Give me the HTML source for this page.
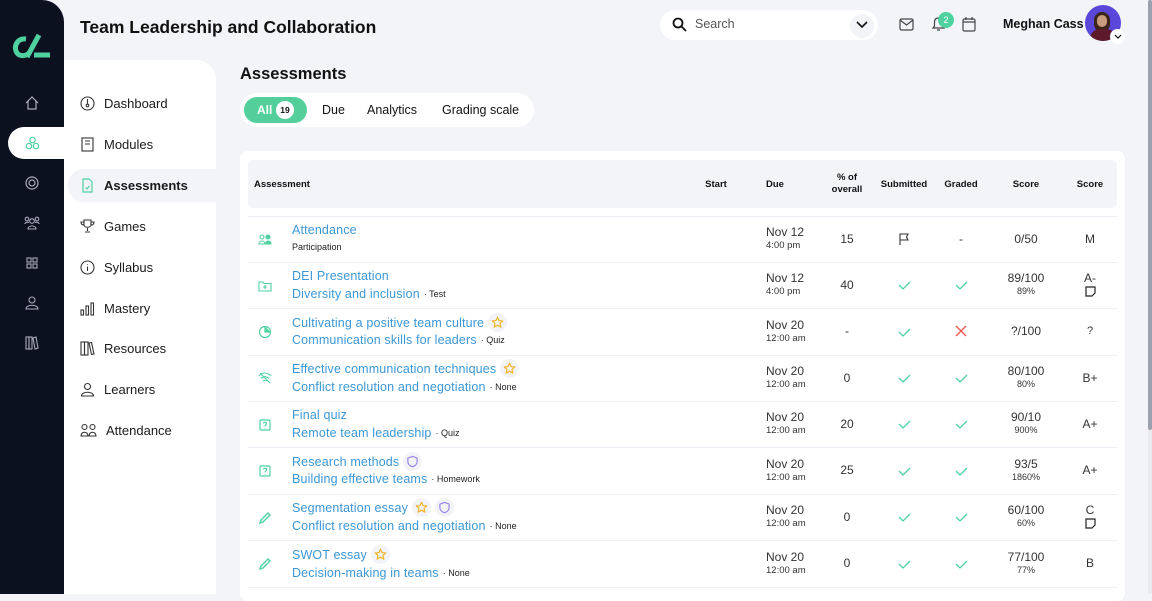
<!DOCTYPE html>
<html><head><meta charset="utf-8"><style>
*{margin:0;padding:0;box-sizing:border-box}
body{width:1152px;height:594px;overflow:hidden;background:#f3f4f8;font-family:"Liberation Sans",sans-serif;color:#111;position:relative}
.abs{position:absolute}
.rail{left:0;top:0;width:64px;height:594px;background:#0c1120;border-top-right-radius:22px}
.nav{left:64px;top:60px;width:152px;height:534px;background:#fff;border-top-right-radius:20px}
.ni{position:absolute;left:16px;font-size:13px;color:#1a1a1a;display:flex;align-items:center;gap:9px}
.ni svg{width:15px;height:15px}
.card{left:240px;top:151px;width:885px;height:450px;background:#fff;border-radius:8px}
.th{left:248px;top:160px;width:869px;height:48px;background:#f3f4f8;border-radius:6px}
.h{position:absolute;font-size:9.5px;font-weight:bold;text-align:center}
.line{position:absolute;left:248px;width:869px;height:1px;background:#eceef3}
.t{position:absolute;left:292px;font-size:12.5px;letter-spacing:0.15px;color:#3b97d6;white-space:nowrap;display:flex;align-items:center;gap:4px}
.s{color:#222;font-size:9px;letter-spacing:0}
.c{position:absolute;font-size:12px;color:#333;text-align:center;transform:translateX(-50%);line-height:13px;white-space:nowrap}
.c small{font-size:9px;display:block}
.d{position:absolute;left:766px;font-size:12px;color:#333;line-height:13px}
.d small{font-size:9.5px;display:block}
.badge{display:inline-flex;align-items:center;justify-content:center;width:19px;height:19px;border-radius:50%;background:#f2f3f7}
.ic{position:absolute;left:258px;width:14px;height:14px}
</style></head><body>
<svg width="0" height="0" style="position:absolute"><defs>
<symbol id="star" viewBox="0 0 14 14"><path d="M7 1.3L8.7 5L12.7 5.3L9.7 8L10.6 12L7 9.9L3.4 12L4.3 8L1.3 5.3L5.3 5Z" fill="none" stroke="#f2b52b" stroke-width="1.3" stroke-linejoin="round"/></symbol>
<symbol id="shield" viewBox="0 0 14 14"><path d="M7 1.5L12 3.3V7C12 10 9.5 11.8 7 12.7C4.5 11.8 2 10 2 7V3.3Z" fill="none" stroke="#9b86e8" stroke-width="1.3" stroke-linejoin="round"/></symbol>
</defs></svg>
<div class="abs rail"></div>
<svg class="abs" style="left:12px;top:33px" width="40" height="28" viewBox="0 0 40 28"><path d="M14 6 C6 5 2 12 4 18 C6 24 14 24 18 19" fill="none" stroke="#4fd1a0" stroke-width="5"/><path d="M27 2 L15 24" stroke="#4fd1a0" stroke-width="5"/><path d="M22 22 H38" stroke="#4fd1a0" stroke-width="5"/></svg>
<svg class="abs" style="left:25px;top:96px" width="14" height="14" viewBox="0 0 14 14" fill="none" stroke="#aab" stroke-width="1.2"><path d="M1 7 L7 1 L13 7 M3 5 V13 H11 V5"/></svg>
<div class="abs" style="left:8px;top:127px;width:56px;height:32px;background:#fff;border-radius:16px 0 0 16px"></div>
<svg class="abs" style="left:25px;top:136px" width="15" height="14" viewBox="0 0 15 14" fill="none" stroke="#4fd1a0" stroke-width="1.2"><circle cx="7.5" cy="4" r="2.7"/><circle cx="4" cy="10" r="2.7"/><circle cx="11" cy="10" r="2.7"/></svg>
<svg class="abs" style="left:25px;top:176px" width="14" height="14" viewBox="0 0 14 14" fill="none" stroke="#aab" stroke-width="1.2"><circle cx="7" cy="7" r="6"/><circle cx="7" cy="7" r="3"/></svg>
<svg class="abs" style="left:24px;top:216px" width="16" height="14" viewBox="0 0 16 14" fill="none" stroke="#aab" stroke-width="1.1"><circle cx="8" cy="5" r="2.3"/><circle cx="3" cy="3" r="1.8"/><circle cx="13" cy="3" r="1.8"/><path d="M4 13 C4 9 12 9 12 13Z M1 8 C1 6 4 6 5 6.5 M15 8 C15 6 12 6 11 6.5"/></svg>
<svg class="abs" style="left:26px;top:257px" width="12" height="12" viewBox="0 0 12 12" fill="none" stroke="#aab" stroke-width="1.1"><rect x="1" y="1" width="4" height="4"/><rect x="7" y="1" width="4" height="4"/><rect x="1" y="7" width="4" height="4"/><rect x="7" y="7" width="4" height="4"/></svg>
<svg class="abs" style="left:25px;top:296px" width="14" height="14" viewBox="0 0 14 14" fill="none" stroke="#aab" stroke-width="1.1"><circle cx="7" cy="4" r="3"/><path d="M1 13 C1 8 13 8 13 13Z"/></svg>
<svg class="abs" style="left:25px;top:336px" width="14" height="14" viewBox="0 0 14 14" fill="none" stroke="#aab" stroke-width="1.1"><rect x="1" y="1" width="3" height="12"/><rect x="4" y="1" width="3" height="12"/><path d="M8 2 L11 1 L13 12 L10 13Z"/></svg>

<div class="abs nav">
 <div class="ni" style="top:36px"><svg viewBox="0 0 15 15" fill="none" stroke="#333" stroke-width="1.1"><circle cx="7.5" cy="7.5" r="6.5"/><path d="M7.5 3 V8"/><circle cx="7.5" cy="9.5" r="1.3"/></svg>Dashboard</div>
 <div class="ni" style="top:77px"><svg viewBox="0 0 15 15" fill="none" stroke="#333" stroke-width="1.1"><rect x="2" y="1" width="11" height="13"/><path d="M5 4H10M5 7H10"/></svg>Modules</div>
 <div class="abs" style="left:4px;top:109px;width:148px;height:33px;background:#f3f4f8;border-radius:16px 0 0 16px"></div>
 <div class="ni" style="top:118px;font-weight:bold"><svg viewBox="0 0 15 15" fill="none" stroke="#4fd1a0" stroke-width="1.2"><path d="M3 1H9L12 4V14H3Z"/><path d="M5.5 9.5L7 11L9.5 8"/></svg>Assessments</div>
 <div class="ni" style="top:159px"><svg viewBox="0 0 15 15" fill="none" stroke="#333" stroke-width="1.1"><path d="M4 1H11V6C11 9 4 9 4 6Z M4 3H1C1 6 3 6 4 6 M11 3H14C14 6 12 6 11 6 M7.5 9V12 M5 13H10"/></svg>Games</div>
 <div class="ni" style="top:200px"><svg viewBox="0 0 15 15" fill="none" stroke="#333" stroke-width="1.1"><circle cx="7.5" cy="7.5" r="6.5"/><path d="M7.5 6.5V11M7.5 4V4.6"/></svg>Syllabus</div>
 <div class="ni" style="top:241px"><svg viewBox="0 0 15 15" fill="none" stroke="#333" stroke-width="1.1"><rect x="1" y="9" width="2.5" height="5"/><rect x="6" y="5" width="2.5" height="9"/><rect x="11" y="2" width="2.5" height="12"/></svg>Mastery</div>
 <div class="ni" style="top:281px"><svg viewBox="0 0 15 15" fill="none" stroke="#333" stroke-width="1.1"><rect x="1" y="1" width="3.5" height="13"/><rect x="4.5" y="1" width="3.5" height="13"/><path d="M9 2L11.5 1.5L14 13L11.5 13.5Z"/></svg>Resources</div>
 <div class="ni" style="top:322px"><svg viewBox="0 0 15 15" fill="none" stroke="#333" stroke-width="1.1"><circle cx="7.5" cy="4.5" r="3"/><path d="M1.5 14C1.5 9 13.5 9 13.5 14Z"/></svg>Learners</div>
 <div class="ni" style="top:363px"><svg viewBox="0 0 17 15" fill="none" stroke="#333" stroke-width="1.1" style="width:17px"><circle cx="4.5" cy="4" r="2.5"/><circle cx="12.5" cy="4" r="2.5"/><path d="M1 13C1 8 8 8 8 13Z M9 13C9 8 16 8 16 13Z"/></svg>Attendance</div>
</div>

<div class="abs" style="left:80px;top:17px;font-size:17.5px;font-weight:bold">Team Leadership and Collaboration</div>
<div class="abs" style="left:660px;top:10px;width:218px;height:30px;background:#fff;border-radius:15px"></div>
<svg class="abs" style="left:672px;top:17px" width="15" height="15" viewBox="0 0 15 15" fill="none" stroke="#111" stroke-width="1.8"><circle cx="6" cy="6" r="4.5"/><path d="M9.5 9.5L14 14"/></svg>
<div class="abs" style="left:695px;top:17px;font-size:12.5px;color:#555">Search</div>
<div class="abs" style="left:850px;top:14px;width:24px;height:24px;border-radius:50%;background:#f3f4f8"></div>
<svg class="abs" style="left:856px;top:20px" width="12" height="9" viewBox="0 0 12 9" fill="none" stroke="#111" stroke-width="1.6"><path d="M1 2L6 7L11 2"/></svg>
<svg class="abs" style="left:899px;top:18px" width="15" height="13" viewBox="0 0 15 13" fill="none" stroke="#444" stroke-width="1.2"><rect x="1" y="1" width="13" height="11" rx="1.5"/><path d="M1 2L7.5 7L14 2"/></svg>
<svg class="abs" style="left:931px;top:16px" width="15" height="16" viewBox="0 0 15 16" fill="none" stroke="#444" stroke-width="1.2"><path d="M2 12H13L11.5 10V6C11.5 3 9.5 2 7.5 2S3.5 3 3.5 6V10Z M6 14H9"/></svg>
<div class="abs" style="left:938px;top:12px;width:16px;height:16px;border-radius:50%;background:#4fd1a0;color:#fff;font-size:9px;text-align:center;line-height:16px">2</div>
<svg class="abs" style="left:962px;top:16px" width="14" height="16" viewBox="0 0 14 16" fill="none" stroke="#444" stroke-width="1.2"><rect x="1" y="3" width="12" height="12" rx="1.5"/><path d="M1 6H13M4 1V4M10 1V4"/></svg>
<div class="abs" style="left:1003px;top:17px;font-size:12.5px;font-weight:bold">Meghan Cass</div>
<div class="abs" style="left:1085px;top:5px;width:36px;height:36px;border-radius:50%;background:#5a46d8;overflow:hidden"><div style="position:absolute;left:9px;top:7px;width:16px;height:20px;border-radius:8px;background:#3b2418"></div><div style="position:absolute;left:12px;top:10px;width:10px;height:12px;border-radius:5px;background:#c99b7e"></div><div style="position:absolute;left:5px;top:24px;width:26px;height:16px;border-radius:10px 10px 0 0;background:#5c1a2a"></div></div>
<div class="abs" style="left:1110px;top:29px;width:15px;height:15px;border-radius:50%;background:#fff"></div>
<svg class="abs" style="left:1114px;top:34px" width="8" height="6" viewBox="0 0 8 6" fill="none" stroke="#111" stroke-width="1.2"><path d="M1 1L4 4L7 1"/></svg>
<div class="abs" style="left:1148px;top:0;width:4px;height:594px;background:#e9eaee"></div>
<div class="abs" style="left:1148px;top:0;width:4px;height:430px;background:#9aa0ad;border-radius:2px"></div>

<div class="abs" style="left:240px;top:65px;font-size:16.5px;font-weight:bold">Assessments</div>
<div class="abs" style="left:240px;top:93px;width:294px;height:34px;background:#fff;border-radius:17px"></div>
<div class="abs" style="left:244px;top:97px;width:63px;height:26px;background:#52cf9a;border-radius:13px"></div>
<div class="abs" style="left:257px;top:103px;font-size:12px;color:#fff;font-weight:bold">All</div>
<div class="abs" style="left:276px;top:101px;width:18px;height:18px;border-radius:50%;background:#fff;font-size:8.5px;font-weight:bold;text-align:center;line-height:18px">19</div>
<div class="abs" style="left:322px;top:103px;font-size:12.5px">Due</div>
<div class="abs" style="left:367px;top:103px;font-size:12.5px">Analytics</div>
<div class="abs" style="left:442px;top:103px;font-size:12.5px">Grading scale</div>

<div class="abs card"></div>
<div class="abs th"></div>
<div class="h" style="left:254px;top:179px">Assessment</div>
<div class="h" style="left:696px;top:179px;width:40px">Start</div>
<div class="h" style="left:766px;top:179px">Due</div>
<div class="h" style="left:822px;top:172px;width:50px;line-height:12px">% of<br>overall</div>
<div class="h" style="left:874px;top:179px;width:60px">Submitted</div>
<div class="h" style="left:936px;top:179px;width:50px">Graded</div>
<div class="h" style="left:1001px;top:179px;width:50px">Score</div>
<div class="h" style="left:1065px;top:179px;width:50px">Score</div>

<div class="line" style="top:216px"></div><div class="line" style="top:262px"></div><div class="line" style="top:308px"></div><div class="line" style="top:355px"></div><div class="line" style="top:401px"></div><div class="line" style="top:447px"></div><div class="line" style="top:494px"></div><div class="line" style="top:540px"></div><div class="line" style="top:587px"></div>

<svg class="ic" style="top:233px" viewBox="0 0 14 14" fill="none" stroke="#4fd1a0" stroke-width="1.1"><circle cx="4" cy="4" r="2"/><circle cx="10" cy="4" r="2" fill="#4fd1a0"/><path d="M1 11C1 7 7 7 7 11Z"/><path d="M7.5 11C7.5 7 13 7 13 11Z" fill="#4fd1a0"/></svg>
<svg class="ic" style="top:279px" viewBox="0 0 14 14" fill="none" stroke="#4fd1a0" stroke-width="1.1"><path d="M1 3H5L6 4.5H13V12H1Z M7 6V10M5 8H9"/></svg>
<svg class="ic" style="top:325px" viewBox="0 0 14 14" fill="none" stroke="#4fd1a0" stroke-width="1.2"><circle cx="7" cy="7" r="5.5"/><path d="M7 1.5V7H12.5" fill="#4fd1a0"/></svg>
<svg class="ic" style="top:371px" viewBox="0 0 14 14" fill="none" stroke="#4fd1a0" stroke-width="1.1"><path d="M1 5C5 1 9 1 13 5M3 7.5C5.5 5 8.5 5 11 7.5M5 10C6 9 8 9 9 10M2 2L12 12"/></svg>
<svg class="ic" style="top:418px" viewBox="0 0 14 14" fill="none" stroke="#4fd1a0" stroke-width="1.2"><rect x="2" y="2" width="10" height="10" rx="1"/><path d="M5.5 5.5C5.5 4 8.5 4 8.5 5.5C8.5 7 7 7 7 8.5M7 10V10.5"/></svg>
<svg class="ic" style="top:464px" viewBox="0 0 14 14" fill="none" stroke="#4fd1a0" stroke-width="1.2"><rect x="2" y="2" width="10" height="10" rx="1"/><path d="M5.5 5.5C5.5 4 8.5 4 8.5 5.5C8.5 7 7 7 7 8.5M7 10V10.5"/></svg>
<svg class="ic" style="top:511px" viewBox="0 0 14 14" fill="none" stroke="#4fd1a0" stroke-width="1.4"><path d="M2 12L3 9L10 2L12 4L5 11Z"/></svg>
<svg class="ic" style="top:557px" viewBox="0 0 14 14" fill="none" stroke="#4fd1a0" stroke-width="1.4"><path d="M2 12L3 9L10 2L12 4L5 11Z"/></svg>

<div class="t" style="top:223px">Attendance</div>
<div class="t" style="top:242px"><span class="s">Participation</span></div>
<div class="t" style="top:269px">DEI Presentation</div>
<div class="t" style="top:287px">Diversity and inclusion <span class="s">· Test</span></div>
<div class="t" style="top:313px">Cultivating a positive team culture <span class="badge"><svg width="13" height="13"><use href="#star"/></svg></span></div>
<div class="t" style="top:333px">Communication skills for leaders <span class="s">· Quiz</span></div>
<div class="t" style="top:359px">Effective communication techniques <span class="badge"><svg width="13" height="13"><use href="#star"/></svg></span></div>
<div class="t" style="top:380px">Conflict resolution and negotiation <span class="s">· None</span></div>
<div class="t" style="top:408px">Final quiz</div>
<div class="t" style="top:426px">Remote team leadership <span class="s">· Quiz</span></div>
<div class="t" style="top:452px">Research methods <span class="badge"><svg width="13" height="13"><use href="#shield"/></svg></span></div>
<div class="t" style="top:472px">Building effective teams <span class="s">· Homework</span></div>
<div class="t" style="top:498px">Segmentation essay <span class="badge"><svg width="13" height="13"><use href="#star"/></svg></span><span class="badge"><svg width="13" height="13"><use href="#shield"/></svg></span></div>
<div class="t" style="top:519px">Conflict resolution and negotiation <span class="s">· None</span></div>
<div class="t" style="top:545px">SWOT essay <span class="badge"><svg width="13" height="13"><use href="#star"/></svg></span></div>
<div class="t" style="top:566px">Decision-making in teams <span class="s">· None</span></div>

<div class="d" style="top:226px">Nov 12<small>4:00 pm</small></div>
<div class="d" style="top:272px">Nov 12<small>4:00 pm</small></div>
<div class="d" style="top:319px">Nov 20<small>12:00 am</small></div>
<div class="d" style="top:365px">Nov 20<small>12:00 am</small></div>
<div class="d" style="top:411px">Nov 20<small>12:00 am</small></div>
<div class="d" style="top:458px">Nov 20<small>12:00 am</small></div>
<div class="d" style="top:504px">Nov 20<small>12:00 am</small></div>
<div class="d" style="top:551px">Nov 20<small>12:00 am</small></div>

<div class="c" style="left:847px;top:233px">15</div>
<div class="c" style="left:847px;top:279px">40</div>
<div class="c" style="left:847px;top:325px">-</div>
<div class="c" style="left:847px;top:372px">0</div>
<div class="c" style="left:847px;top:418px">20</div>
<div class="c" style="left:847px;top:464px">25</div>
<div class="c" style="left:847px;top:511px">0</div>
<div class="c" style="left:847px;top:557px">0</div>

<svg class="abs" style="left:898px;top:233px" width="12" height="13" viewBox="0 0 12 13" fill="none" stroke="#333" stroke-width="1.1"><path d="M2 12V1H10L8.5 4L10 7H2"/></svg>
<div class="c" style="left:961px;top:233px">-</div>
<svg class="abs" style="left:0;top:0" width="1152" height="594" viewBox="0 0 1152 594" fill="none" stroke="#4fd1a0" stroke-width="1.3">
<path d="M899 285L903 289L910 282"/><path d="M956 285L960 289L967 282"/>
<path d="M899 332L903 336L910 329"/>
<path d="M899 378L903 382L910 375"/><path d="M956 378L960 382L967 375"/>
<path d="M899 424L903 428L910 421"/><path d="M956 424L960 428L967 421"/>
<path d="M899 471L903 475L910 468"/><path d="M956 471L960 475L967 468"/>
<path d="M899 517L903 521L910 514"/><path d="M956 517L960 521L967 514"/>
<path d="M899 564L903 568L910 561"/><path d="M956 564L960 568L967 561"/>
<path d="M956 326L966 336M966 326L956 336" stroke="#ef5350"/>
</svg>

<div class="c" style="left:1026px;top:233px">0/50</div>
<div class="c" style="left:1026px;top:272px">89/100<small>89%</small></div>
<div class="c" style="left:1026px;top:325px">?/100</div>
<div class="c" style="left:1026px;top:365px">80/100<small>80%</small></div>
<div class="c" style="left:1026px;top:411px">90/10<small>900%</small></div>
<div class="c" style="left:1026px;top:458px">93/5<small>1860%</small></div>
<div class="c" style="left:1026px;top:504px">60/100<small>60%</small></div>
<div class="c" style="left:1026px;top:551px">77/100<small>77%</small></div>

<div class="c" style="left:1090px;top:233px">M</div>
<div class="c" style="left:1090px;top:272px">A-</div>
<svg class="abs" style="left:1085px;top:286px" width="11" height="11" viewBox="0 0 11 11" fill="none" stroke="#222" stroke-width="1.2"><path d="M1 1H10V7L7 10H1Z"/></svg>
<div class="c" style="left:1090px;top:325px;font-size:11px">?</div>
<div class="c" style="left:1090px;top:372px">B+</div>
<div class="c" style="left:1090px;top:418px">A+</div>
<div class="c" style="left:1090px;top:464px">A+</div>
<div class="c" style="left:1090px;top:504px">C</div>
<svg class="abs" style="left:1085px;top:518px" width="11" height="11" viewBox="0 0 11 11" fill="none" stroke="#222" stroke-width="1.2"><path d="M1 1H10V7L7 10H1Z"/></svg>
<div class="c" style="left:1090px;top:557px">B</div>
</body></html>
